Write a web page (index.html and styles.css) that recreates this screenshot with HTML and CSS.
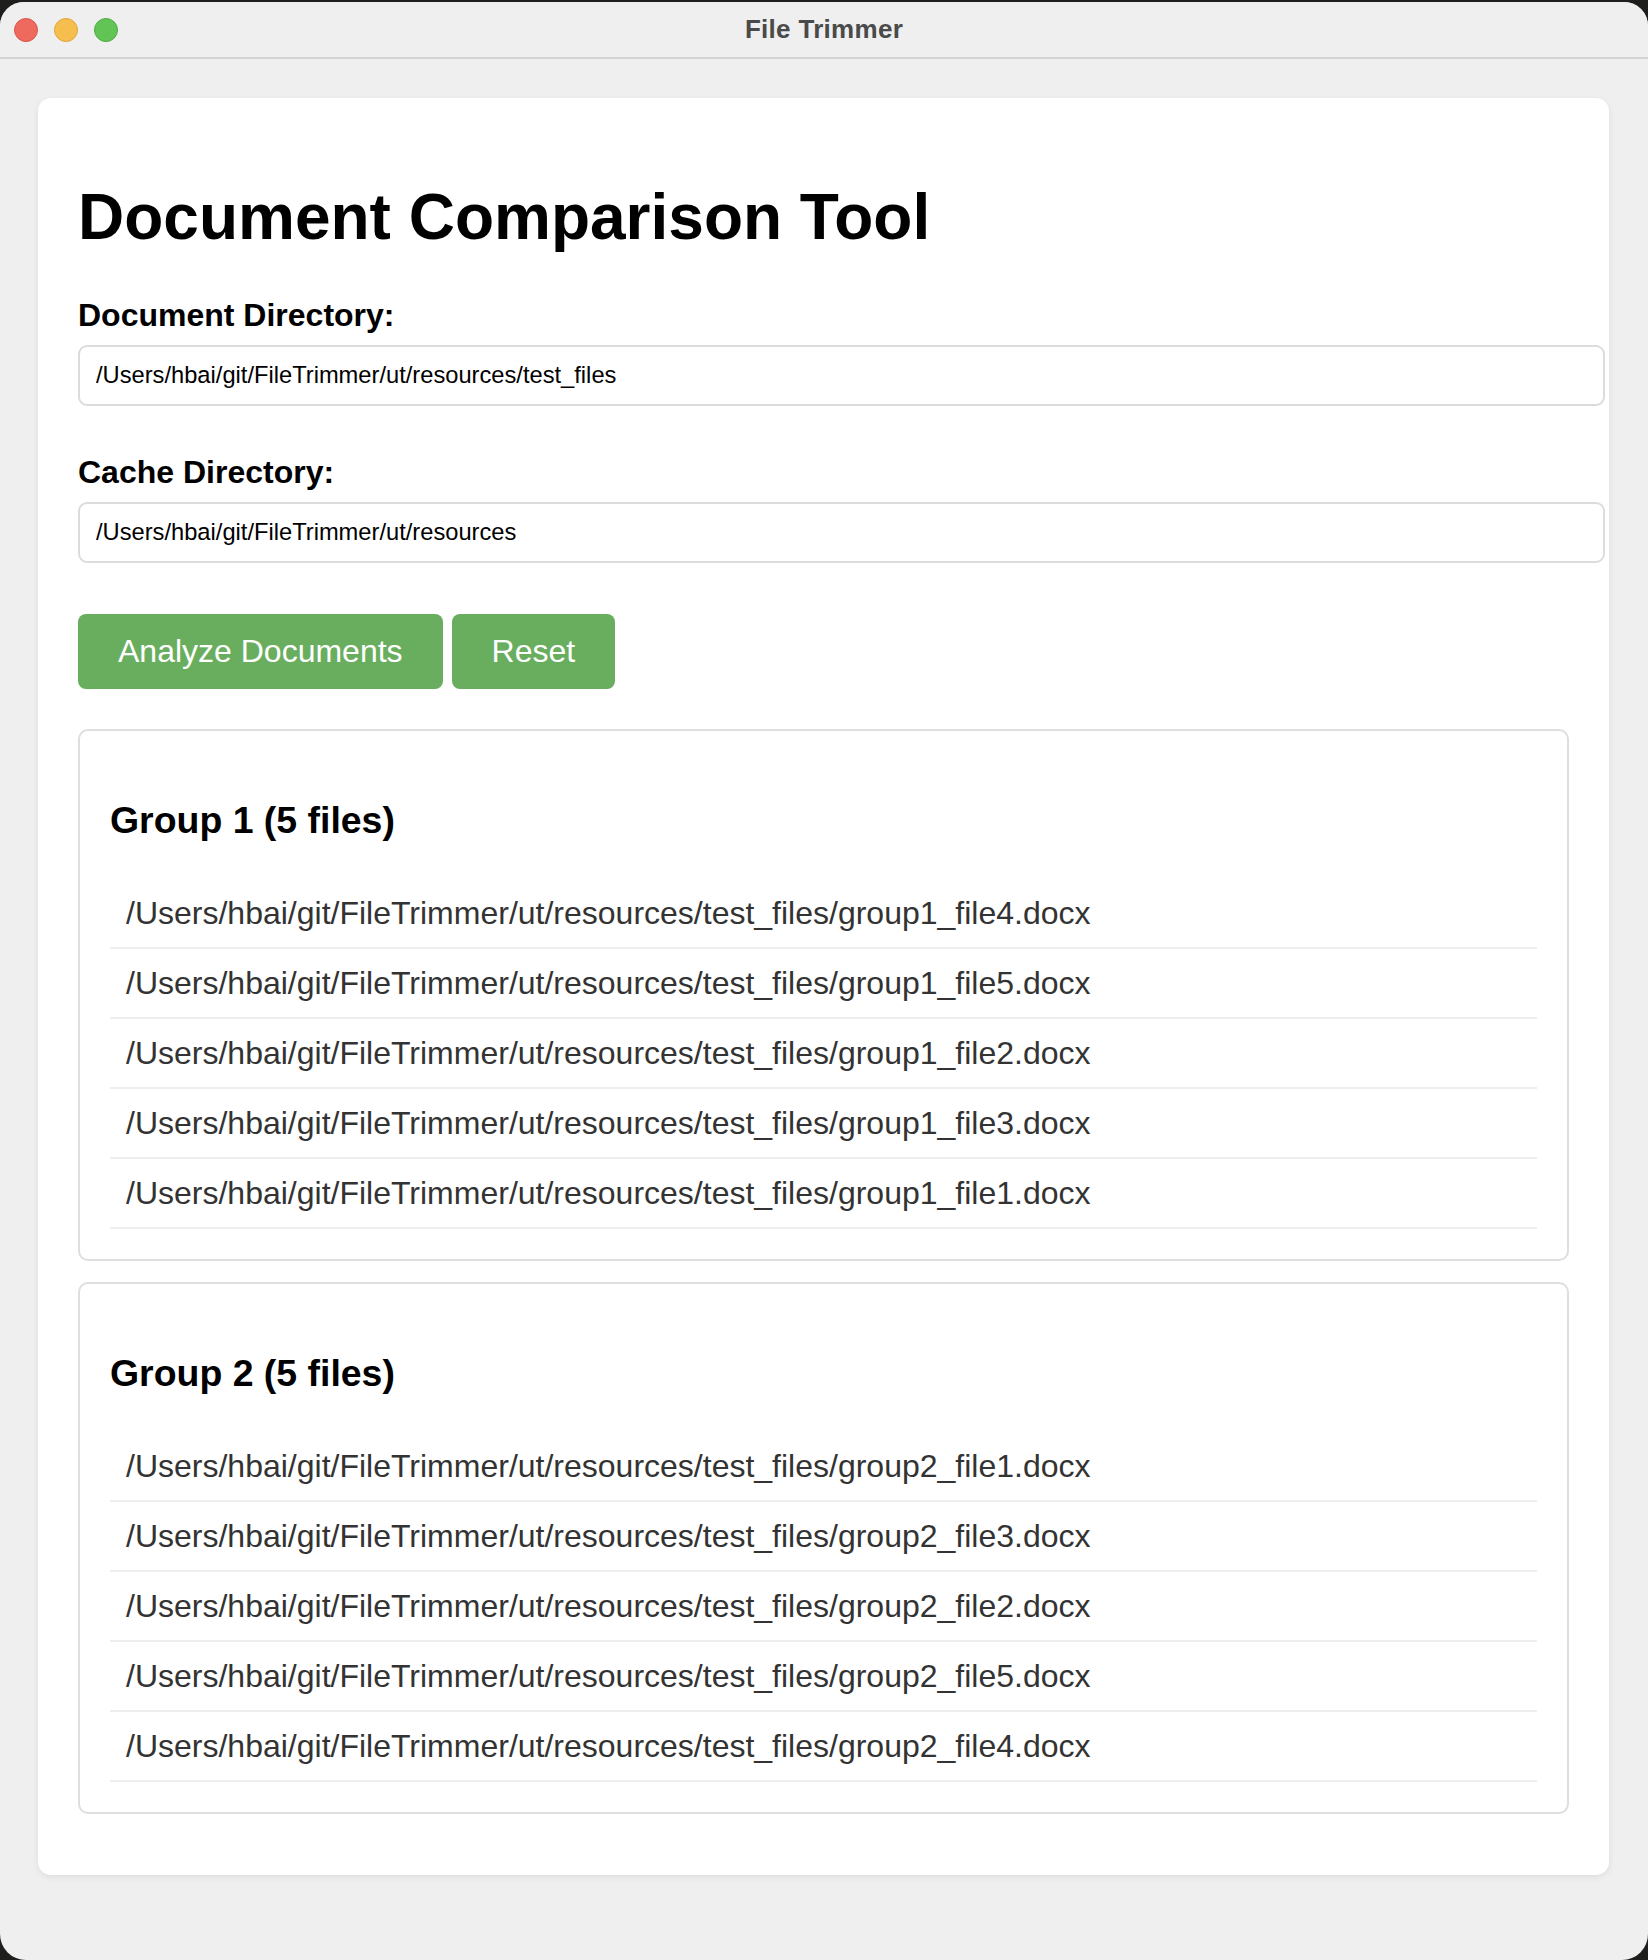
FILE: index.html
```html
<!DOCTYPE html>
<html lang="en">
<head>
<meta charset="utf-8">
<title>File Trimmer</title>
<link rel="stylesheet" href="styles.css">
</head>
<body>
<div class="window">
  <div class="titlebar">
    <div class="lights">
      <span class="light red"></span>
      <span class="light yellow"></span>
      <span class="light green"></span>
    </div>
    <div class="title">File Trimmer</div>
  </div>
  <div class="content">
    <div class="card">
      <h1 class="heading">Document Comparison Tool</h1>
      <div class="form-group">
        <label class="label">Document Directory:</label>
        <input class="field" type="text" value="/Users/hbai/git/FileTrimmer/ut/resources/test_files">
      </div>
      <div class="form-group">
        <label class="label">Cache Directory:</label>
        <input class="field" type="text" value="/Users/hbai/git/FileTrimmer/ut/resources">
      </div>
      <div class="actions">
        <button class="btn">Analyze Documents</button>
        <button class="btn">Reset</button>
      </div>
      <div class="group">
        <h3 class="group-title">Group 1 (5 files)</h3>
        <ul class="file-list">
          <li class="file">/Users/hbai/git/FileTrimmer/ut/resources/test_files/group1_file4.docx</li>
          <li class="file">/Users/hbai/git/FileTrimmer/ut/resources/test_files/group1_file5.docx</li>
          <li class="file">/Users/hbai/git/FileTrimmer/ut/resources/test_files/group1_file2.docx</li>
          <li class="file">/Users/hbai/git/FileTrimmer/ut/resources/test_files/group1_file3.docx</li>
          <li class="file">/Users/hbai/git/FileTrimmer/ut/resources/test_files/group1_file1.docx</li>
        </ul>
      </div>
      <div class="group">
        <h3 class="group-title">Group 2 (5 files)</h3>
        <ul class="file-list">
          <li class="file">/Users/hbai/git/FileTrimmer/ut/resources/test_files/group2_file1.docx</li>
          <li class="file">/Users/hbai/git/FileTrimmer/ut/resources/test_files/group2_file3.docx</li>
          <li class="file">/Users/hbai/git/FileTrimmer/ut/resources/test_files/group2_file2.docx</li>
          <li class="file">/Users/hbai/git/FileTrimmer/ut/resources/test_files/group2_file5.docx</li>
          <li class="file">/Users/hbai/git/FileTrimmer/ut/resources/test_files/group2_file4.docx</li>
        </ul>
      </div>
    </div>
  </div>
</div>
</body>
</html>
```

FILE: styles.css
```css
html, body {
  margin: 0;
  padding: 0;
  background: #1e1e1c;
}

body {
  font-family: "Liberation Sans", Arial, sans-serif;
  padding-top: 2px;
}

.window {
  height: 1958px;
  background: #efefef;
  border-radius: 24px 24px 26px 26px;
  overflow: hidden;
  display: flex;
  flex-direction: column;
}

.titlebar {
  height: 55px;
  flex: none;
  border-bottom: 2px solid #d3d3d3;
  display: flex;
  align-items: center;
  justify-content: center;
  position: relative;
  background: #efefef;
}

.lights {
  position: absolute;
  left: 14px;
  top: 16px;
  display: flex;
  gap: 16px;
}

.light {
  width: 24px;
  height: 24px;
  border-radius: 50%;
  box-sizing: border-box;
}

.red { background: #ee6a5f; border: 1px solid #d9564b; }
.yellow { background: #f5be4f; border: 1px solid #dfa63b; }
.green { background: #62c454; border: 1px solid #50ab43; }

.title {
  font-size: 26px;
  font-weight: bold;
  color: #4a4a4a;
  letter-spacing: 0.3px;
}

.content {
  padding: 39px 39px 0 38px;
}

.card {
  background: #ffffff;
  border-radius: 13px;
  padding: 40px 40px 41px 40px;
  box-shadow: 0 2px 6px rgba(0, 0, 0, 0.08);
}

.heading {
  font-size: 64px;
  font-weight: bold;
  margin: 43px 0 42px 0;
  color: #000;
  line-height: 73.6px;
}

.form-group {
  margin-bottom: 48px;
}

.label {
  display: block;
  font-size: 32px;
  font-weight: bold;
  color: #000;
  line-height: 37px;
  margin-bottom: 11px;
}

.field {
  display: block;
  width: 100%;
  box-sizing: content-box;
  margin: 0;
  padding: 16px;
  border: 2px solid #dcdcdc;
  border-radius: 9px;
  font-family: "Liberation Sans", Arial, sans-serif;
  font-size: 23.7px;
  line-height: 25px;
  height: 25px;
  color: #000;
  background: #fff;
  outline: none;
}

.actions {
  display: flex;
  gap: 9px;
  margin-top: 51px;
  margin-bottom: 40px;
}

.btn {
  background: #69ae5e;
  color: #fff;
  border: none;
  border-radius: 8px;
  font-family: "Liberation Sans", Arial, sans-serif;
  font-size: 32px;
  line-height: 37px;
  padding: 19px 40px;
  margin: 0;
  cursor: pointer;
}

.group {
  border: 2px solid #dedede;
  border-radius: 10px;
  padding: 30px;
  margin-bottom: 21px;
}

.group:last-child {
  margin-bottom: 20px;
}

.group-title {
  font-size: 37.44px;
  font-weight: bold;
  margin: 38px 0 37px 0;
  line-height: 43px;
  color: #000;
}

.file-list {
  list-style: none;
  margin: 0;
  padding: 0;
}

.file {
  font-size: 32px;
  line-height: 36px;
  padding: 16px 16px;
  border-bottom: 2px solid #eeeeee;
  color: #333333;
}
```
